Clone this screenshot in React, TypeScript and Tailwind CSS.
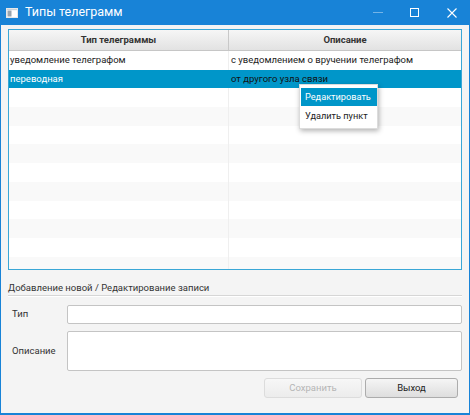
import React from "react";

const font = { fontFamily: 'Roboto, "Open Sans", sans-serif' };

const rows: [string, string][] = [
  ["уведомление телеграфом", "с уведомлением о вручении телеграфом"],
  ["переводная", "от другого узла связи"],
];

export default function App() {
  const emptyRows = Array.from({ length: 11 });
  return (
    <div
      className="w-[470px] h-[415px] flex flex-col bg-[#1883d7] relative overflow-hidden text-[9.5px] text-[#222] whitespace-nowrap"
      style={font}
    >
      {/* Title bar */}
      <div className="h-[25px] flex items-center text-white shrink-0">
        <svg width="12" height="10" viewBox="0 0 12 10" className="ml-[6px]">
          <rect x="0.5" y="0.5" width="11" height="9" fill="#ffffff" stroke="#e8e8e8" />
          <rect x="1.5" y="2.5" width="4" height="6" fill="#9aa4ad" />
          <rect x="1" y="1" width="10" height="1.2" fill="#c9d3dc" />
        </svg>
        <span className="ml-[7px] text-[12.5px]">Типы телеграмм</span>
        <div className="ml-auto flex items-center h-full">
          <div className="w-[37px] h-full flex items-center justify-center">
            <div className="w-[10px] h-[1px] bg-white opacity-40" />
          </div>
          <div className="w-[37px] h-full flex items-center justify-center">
            <div className="w-[9px] h-[9px] border border-white" />
          </div>
          <div className="w-[37px] h-full flex items-center justify-center">
            <svg width="10" height="10" viewBox="0 0 10 10">
              <path d="M0.5 0.5 L9.5 9.5 M9.5 0.5 L0.5 9.5" stroke="white" strokeWidth="1.1" />
            </svg>
          </div>
        </div>
      </div>

      {/* Body */}
      <div className="flex-1 mx-[1px] mb-[2px] bg-[#f4f4f4] flex flex-col px-[7px] pt-[4px]">
        {/* Table */}
        <div className="h-[241px] border border-[#3aa7d6] bg-white flex flex-col overflow-hidden">
          <div className="h-[21px] shrink-0 flex border-b border-[#c6c6c6] bg-gradient-to-b from-[#f6f6f6] to-[#e2e2e2] font-bold text-[#333]">
            <div className="w-[220px] flex items-center justify-center border-r border-[#c8c8c8]">
              Тип телеграммы
            </div>
            <div className="flex-1 flex items-center justify-center">Описание</div>
          </div>
          {rows.map(([a, b], i) => {
            const sel = i === 1;
            return (
              <div
                key={i}
                className={`h-[18.7px] shrink-0 flex items-center ${
                  sel ? "bg-[#0096c9] text-white" : "bg-white"
                }`}
              >
                <div className={`w-[220px] h-full flex items-center pl-[1px] border-r ${sel ? "border-[#0096c9]" : "border-[#efefef]"}`}>
                  {a}
                </div>
                <div className={`flex-1 pl-[2px] ${sel ? "text-[#111]" : ""}`}>{b}</div>
              </div>
            );
          })}
          {emptyRows.map((_, i) => (
            <div
              key={i}
              className={`h-[18.7px] shrink-0 flex ${i % 2 === 0 ? "bg-white" : "bg-[#f9f9f9]"}`}
            >
              <div className="w-[220px] h-full border-r border-[#efefef]" />
            </div>
          ))}
        </div>

        {/* Section title */}
        <div className="mt-[10px] h-[15px] flex items-center text-[#333] leading-none">
          Добавление новой / Редактирование записи
        </div>
        <div className="h-[1px] bg-[#d6d6d6]" />
        <div className="h-[1px] bg-white" />

        {/* Form */}
        <div className="mt-[8px] flex items-center">
          <div className="w-[59px] pl-[4px] text-[#333]">Тип</div>
          <div className="flex-1 h-[19px] bg-white border border-[#c4c4c4] rounded-[2px]" />
        </div>
        <div className="mt-[7px] flex items-center">
          <div className="w-[59px] pl-[4px] text-[#333]">Описание</div>
          <div className="flex-1 h-[40px] bg-white border border-[#c4c4c4] rounded-[2px]" />
        </div>
        <div className="mt-[7px] flex justify-end gap-[3px] pr-[4px]">
          <div className="w-[98px] h-[20px] rounded-[3px] border border-[#dcdcdc] bg-gradient-to-b from-[#f7f7f7] to-[#ececec] flex items-center justify-center text-[#b5b5b5]">
            Сохранить
          </div>
          <div className="w-[93px] h-[20px] rounded-[3px] border border-[#acacac] bg-gradient-to-b from-[#f5f5f5] to-[#dedede] flex items-center justify-center text-[#222]">
            Выход
          </div>
        </div>
      </div>

      {/* Context menu */}
      <div className="absolute left-[299px] top-[84px] w-[79px] bg-white border border-[#dcdcdc] shadow-[1px_2px_5px_rgba(0,0,0,0.3)] py-[3px] pl-[1px] text-[9.2px]">
        <div className="h-[18px] flex items-center pl-[4px] bg-[#0096c9] text-white">Редактировать</div>
        <div className="h-[19px] flex items-center pl-[4px] text-[#222]">Удалить пункт</div>
      </div>
    </div>
  );
}
